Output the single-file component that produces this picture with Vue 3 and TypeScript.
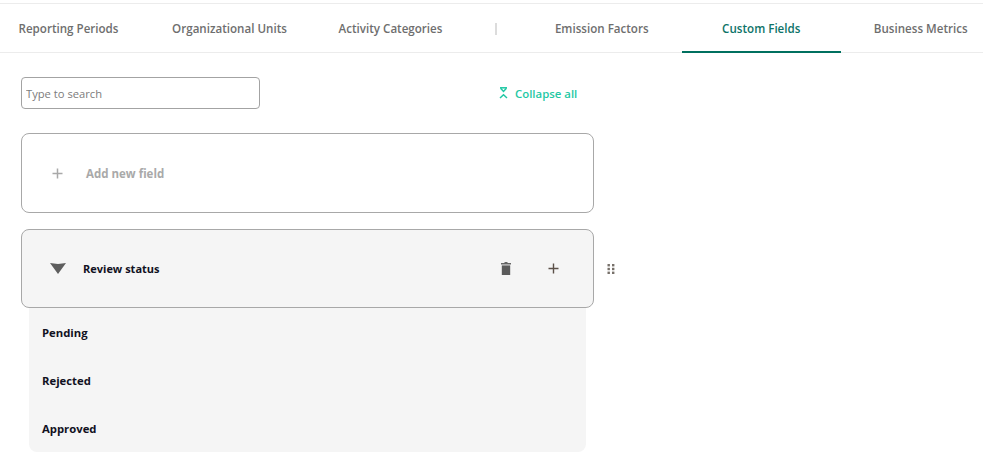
<script setup lang="ts">
const leftTabs: string[] = ['Reporting Periods', 'Organizational Units', 'Activity Categories']
const rightTabs: string[] = ['Emission Factors', 'Custom Fields', 'Business Metrics']
const options: string[] = ['Pending', 'Rejected', 'Approved']
</script>

<template>
  <div class="page">
    <nav class="tabs">
      <div v-for="t in leftTabs" :key="t" class="tab wide">{{ t }}</div>
      <div class="divider"><span></span></div>
      <div
        v-for="t in rightTabs"
        :key="t"
        class="tab"
        :class="{ active: t === 'Custom Fields' }"
      >{{ t }}</div>
    </nav>

    <main class="content">
      <div class="toolbar">
        <input class="search" type="text" placeholder="Type to search" />
        <button class="collapse" type="button">
          <svg width="9" height="12" viewBox="0 0 9 12" fill="none" stroke="#1fc8a4" stroke-width="1.5">
            <path d="M1 .8h7" />
            <path d="M1.6 1.2 4.5 4.4 7.4 1.2" />
            <path d="M1 11 4.5 7.8 8 11" />
          </svg>
          Collapse all
        </button>
      </div>

      <div class="card add">
        <svg class="plus-icon" width="11" height="11" viewBox="0 0 11 11" stroke="#a9a9a9" stroke-width="1.5">
          <path d="M5.5 .5v10M.5 5.5h10" />
        </svg>
        <span>Add new field</span>
      </div>

      <div class="field-row">
        <div class="card field">
          <svg class="caret" width="16" height="11" viewBox="0 0 16 11">
            <path d="M0 0 8 1 16 0 8 11Z" fill="#5e5e5e" />
          </svg>
          <span class="field-name">Review status</span>
          <svg class="trash" width="10" height="13" viewBox="0 0 10 13">
            <path d="M3.5 0h3v1H10v1.6H0V1h3.5Z" fill="#666" />
            <path d="M.8 3.4h8.4V13H.8Z" fill="#5b5b5b" />
          </svg>
          <svg class="plus-dark" width="11" height="11" viewBox="0 0 11 11" stroke="#5b5048" stroke-width="1.4">
            <path d="M5.5 .5v10M.5 5.5h10" />
          </svg>
        </div>
        <svg class="grip" width="8" height="10" viewBox="0 0 8 10" fill="#77706a">
          <rect x="0.5" y="0" width="2.4" height="2.4" /><rect x="5" y="0" width="2.4" height="2.4" />
          <rect x="0.5" y="3.8" width="2.4" height="2.4" /><rect x="5" y="3.8" width="2.4" height="2.4" />
          <rect x="0.5" y="7.6" width="2.4" height="2.4" /><rect x="5" y="7.6" width="2.4" height="2.4" />
        </svg>
      </div>

      <ul class="options">
        <li v-for="o in options" :key="o">{{ o }}</li>
      </ul>
    </main>
  </div>
</template>

<style>
html, body { margin: 0; background: #fff; overflow: hidden; }
</style>

<style scoped>
.page {
  width: 983px;
  height: 468px;
  overflow: hidden;
  padding-top: 3px;
  box-sizing: border-box;
  font-family: "Open Sans", "Noto Sans", sans-serif;
}
.tabs {
  display: flex;
  height: 50px;
  box-sizing: border-box;
  border-top: 1px solid #ececec;
  border-bottom: 1px solid #ececec;
}
.tab {
  flex: 0 0 159.5px;
  height: 49px;
  line-height: 49px;
  text-align: center;
  font-size: 11.6px;
  font-weight: 600;
  color: #6e6e6e;
  white-space: nowrap;
  box-sizing: border-box;
}
.tab.wide { flex-basis: 161px; }
.tab:first-child { margin-left: -12px; }
.tab.active {
  color: #0e7368;
  border-bottom: 2px solid #00705f;
}
.divider {
  flex: 0 0 51px;
  display: flex;
  align-items: center;
  justify-content: center;
}
.divider span {
  width: 2px;
  height: 12px;
  background: #dcdcdc;
  margin-top: 2px;
  margin-right: 2px;
}
.content {
  padding: 24px 0 0 21px;
}
.toolbar {
  display: flex;
  align-items: center;
  height: 32px;
}
.search {
  width: 239px;
  height: 32px;
  box-sizing: border-box;
  border: 1px solid #a3a3a3;
  border-radius: 4px;
  padding: 0 4px;
  font-family: inherit;
  font-size: 11.2px;
  color: #555;
  outline: none;
}
.search::placeholder { color: #7c7c7c; opacity: 1; }
.collapse {
  display: flex;
  align-items: center;
  gap: 7px;
  margin-left: 239px;
  padding: 0;
  border: 0;
  background: none;
  font-family: inherit;
  font-size: 11.4px;
  font-weight: 600;
  color: #1fc8a4;
}
.card {
  width: 573px;
  box-sizing: border-box;
  border: 1px solid #a8a8a8;
  border-radius: 8px;
  display: flex;
  align-items: center;
}
.add {
  height: 80px;
  margin-top: 24px;
  padding-left: 30px;
  font-size: 11.5px;
  font-weight: 700;
  color: #a9a9a9;
}
.plus-icon { margin-right: 23px; }
.field-row {
  display: flex;
  align-items: center;
  margin-top: 16px;
}
.field {
  height: 79px;
  background: #f5f5f5;
  padding-left: 28px;
}
.field-name {
  margin-left: 17px;
  font-size: 11px;
  font-weight: 700;
  color: #111122;
  flex: 1;
}
.trash { margin-right: 37px; }
.plus-dark { margin-right: 34px; }
.grip { margin-left: 13px; }
.options {
  list-style: none;
  width: 557px;
  margin: 0 0 0 8px;
  padding: 1px 0 0 0;
  height: 144px;
  box-sizing: border-box;
  background: #f5f5f5;
  border-radius: 0 0 8px 8px;
}
.options li {
  height: 48px;
  line-height: 48px;
  padding-left: 13px;
  font-size: 11.3px;
  font-weight: 700;
  color: #111122;
}
</style>
